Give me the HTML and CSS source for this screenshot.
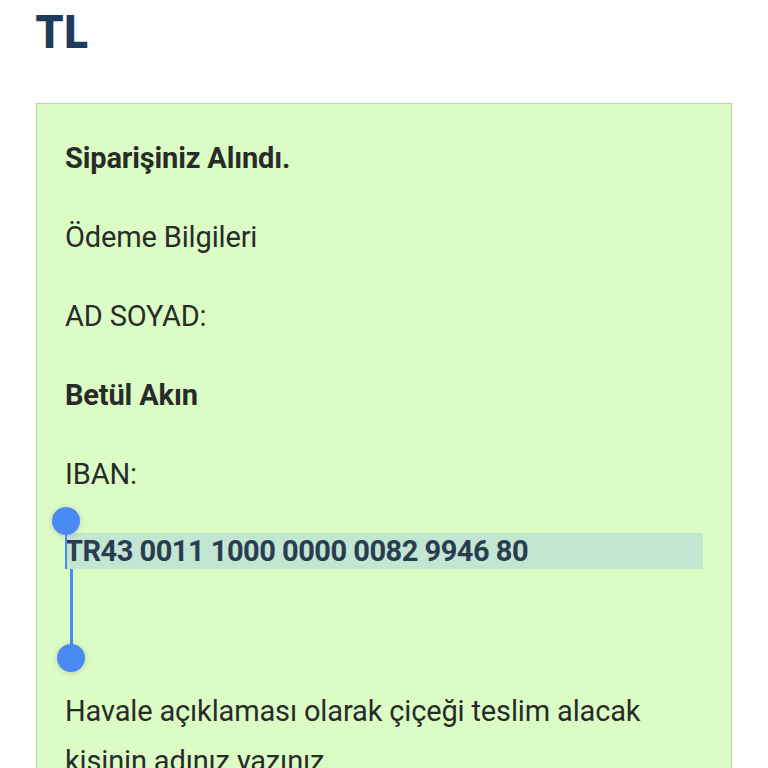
FILE: index.html
```html
<!DOCTYPE html>
<html lang="tr">
<head>
<meta charset="utf-8">
<link rel="stylesheet" href="styles.css">
</head>
<body>
<div class="page">
  <h1 class="price">TL</h1>
  <div class="notice">
    <p class="strong">Siparişiniz Alındı.</p>
    <p>Ödeme Bilgileri</p>
    <p>AD SOYAD:</p>
    <p class="strong">Betül Akın</p>
    <p>IBAN:</p>
    <p class="iban"><span class="sel">TR43 0011 1000 0000 0082 9946 80</span><span class="handle handle-start"><span class="knob"></span><span class="stem"></span></span><span class="handle handle-end"><span class="stem"></span><span class="knob"></span></span></p>
    <p class="empty">&nbsp;</p>
    <p class="wrap">Havale açıklaması olarak çiçeği teslim alacak kişinin adınız yazınız.</p>
  </div>
</div>
</body>
</html>
```
FILE: styles.css
```css
html, body {
  margin: 0;
  padding: 0;
  background: #ffffff;
}
.page {
  padding: 0 36px;
  font-family: Roboto, "Liberation Sans", sans-serif;
}
.price {
  margin: 0;
  padding: 7px 0 0 0;
  height: 103px;
  box-sizing: border-box;
  font-family: "DejaVu Sans", "Liberation Sans", sans-serif;
  font-stretch: condensed;
  font-weight: 700;
  font-size: 44px;
  line-height: 52px;
  color: #1f3b5b;
}
.notice {
  background: #dcfcc5;
  border: 1px solid #b8d99f;
  padding: 29px 28px 0 28px;
  color: #282c28;
  font-size: 29px;
  line-height: 50px;
  letter-spacing: -0.15px;
}
.notice p {
  margin: 0 0 29px 0;
}
.strong {
  font-weight: 700;
}
.notice .iban {
  position: relative;
  padding: 5px 0 9px 0;
  font-weight: 700;
  color: #2a3d50;
  letter-spacing: -0.5px;
}
.sel {
  display: block;
  background: #c2e6d2;
  line-height: 36px;
}
.empty {
  height: 50px;
}
.notice .wrap {
  margin: 0;
}
.handle {
  position: absolute;
  display: flex;
  flex-direction: column;
  align-items: center;
}
.knob {
  width: 28px;
  height: 28px;
  border-radius: 50%;
  background: #4a8af4;
  box-shadow: 0 1px 6px rgba(0, 0, 0, 0.16);
}
.stem {
  background: #4a8af4;
}
.handle-start {
  left: -13px;
  top: -21px;
}
.handle-start .stem {
  width: 2px;
  height: 48px;
  margin-top: -14px;
}
.handle-end {
  left: -8px;
  top: 41px;
}
.handle-end .stem {
  width: 3px;
  height: 89px;
  margin-bottom: -14px;
}
```
